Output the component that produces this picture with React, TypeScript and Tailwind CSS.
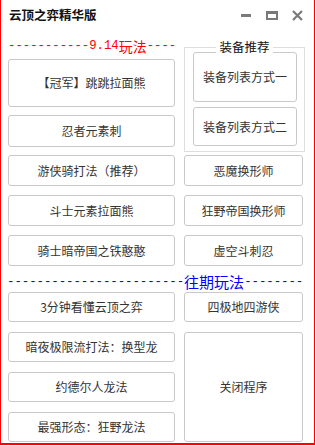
import React from "react";

const cjk = '"Noto Sans CJK SC", "Noto Sans", sans-serif';

function Btn({ children, className = "" }: { children: React.ReactNode; className?: string }) {
  return (
    <div
      className={
        "flex items-center justify-center rounded-[3px] border border-[#c9c9c9] bg-white text-[12px] text-[#333] " +
        className
      }
      style={{ fontFamily: cjk }}
    >
      {children}
    </div>
  );
}

export default function App() {
  return (
    <div className="w-[315px] h-[445px] bg-white border-l-[1px] border-r-[1px] border-b-[2px] border-[#ff0000] box-border overflow-hidden">
      {/* title bar */}
      <div className="h-[30px] flex items-center pl-[8px] pr-[11px]">
        <div className="text-[12.5px] font-bold text-[#111]" style={{ fontFamily: cjk }}>
          云顶之弈精华版
        </div>
        <div className="ml-auto flex items-center">
          <div className="w-[10px] h-[3px] bg-[#7a7a7a] mt-[1px]" />
          <div className="ml-[15px] w-[12px] h-[9px] border-2 border-t-[3px] border-[#7a7a7a]" />
          <svg className="ml-[14px]" width="11" height="11" viewBox="0 0 11 11">
            <path d="M1 1 L10 10 M10 1 L1 10" stroke="#7a7a7a" strokeWidth="2.2" />
          </svg>
        </div>
      </div>

      {/* top block */}
      <div className="flex h-[122px] pl-[7px]">
        <div className="w-[167px] flex flex-col">
          <div
            className="mt-[8px] h-[16px] flex items-center whitespace-nowrap text-[#ff0000] text-[12.3px] leading-[16px]"
            style={{ fontFamily: '"Liberation Mono", monospace' }}
          >
            <span>-----------9.14</span>
            <span className="text-[14px] leading-[16px]" style={{ fontFamily: cjk }}>
              玩法
            </span>
            <span>----</span>
          </div>
          <Btn className="mt-[5px] h-[48px]">【冠军】跳跳拉面熊</Btn>
          <Btn className="mt-[8px] h-[32px]">忍者元素刺</Btn>
        </div>
        <div className="ml-[9px] mt-[17px] relative w-[121px] h-[105px] border border-[#dedede] flex flex-col pl-[8px] pr-[7px] pt-[4px]">
          <div className="absolute left-0 right-0 top-[-8px] flex justify-center">
            <div
              className="bg-white px-[3px] text-[12.5px] leading-[14px] text-[#111]"
              style={{ fontFamily: cjk }}
            >
              装备推荐
            </div>
          </div>
          <Btn className="h-[50px]">装备列表方式一</Btn>
          <Btn className="mt-[5px] h-[39px]">装备列表方式二</Btn>
        </div>
      </div>

      {/* rows section 1 */}
      <div className="mt-[3px] pl-[7px] grid grid-cols-[167px_119px] gap-x-[9px] gap-y-[9px] auto-rows-[31px]">
        <Btn>游侠骑打法（推荐）</Btn>
        <Btn>恶魔换形师</Btn>
        <Btn>斗士元素拉面熊</Btn>
        <Btn>狂野帝国换形师</Btn>
        <Btn>骑士暗帝国之铁憨憨</Btn>
        <Btn>虚空斗刺忍</Btn>
      </div>

      {/* blue header */}
      <div
        className="mt-[8px] pl-[6px] h-[16px] flex items-center whitespace-nowrap text-[#0000ff] text-[12.3px] leading-[16px]"
        style={{ fontFamily: '"Liberation Mono", monospace' }}
      >
        <span>------------------------</span>
        <span className="text-[15px] leading-[16px]" style={{ fontFamily: cjk }}>
          往期玩法
        </span>
        <span>--------</span>
      </div>

      {/* rows section 2 */}
      <div className="mt-[2px] pl-[7px] grid grid-cols-[167px_119px] gap-x-[9px] gap-y-[10px] grid-rows-[30px_30px_30px_30px]">
        <Btn>3分钟看懂云顶之弈</Btn>
        <Btn>四极地四游侠</Btn>
        <Btn>暗夜极限流打法：换型龙</Btn>
        <Btn className="row-span-3">关闭程序</Btn>
        <Btn>约德尔人龙法</Btn>
        <Btn>最强形态：狂野龙法</Btn>
      </div>
    </div>
  );
}
